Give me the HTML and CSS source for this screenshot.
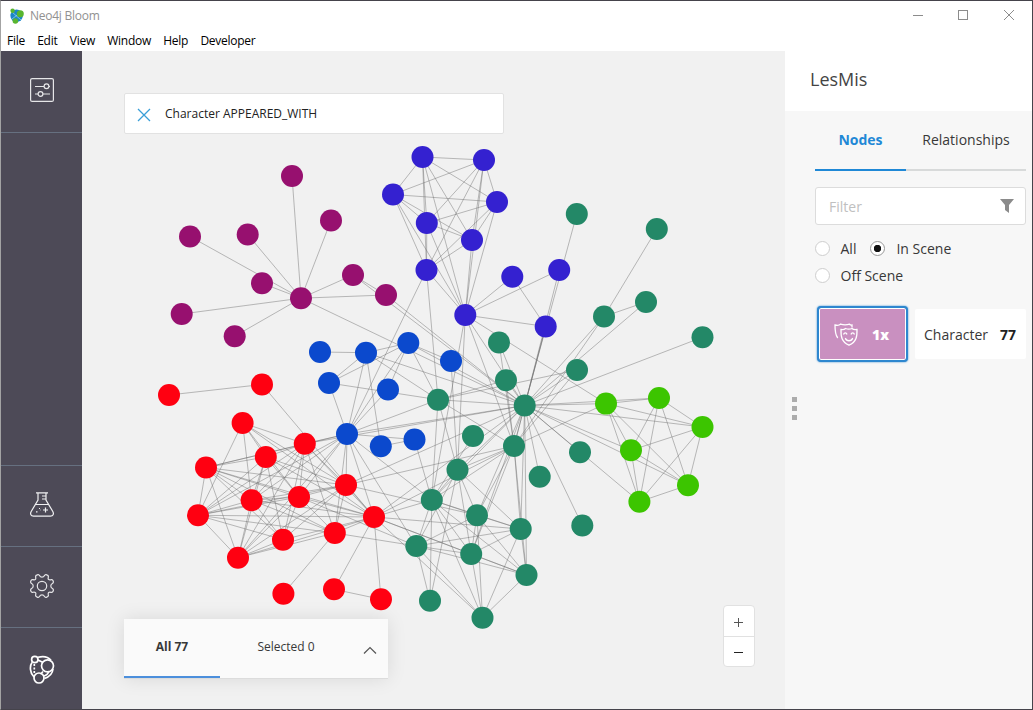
FILE: index.html
```html
<!DOCTYPE html>
<html lang="en">
<head>
<meta charset="utf-8">
<title>Neo4j Bloom</title>
<link rel="stylesheet" href="styles.css">
</head>
<body>
<div class="window">
  <header class="titlebar">
    <svg class="app-logo" width="16" height="16" viewBox="0 0 16 16">
      <circle cx="7.600" cy="7.800" r="6.200" fill="#1b86c8"/>
      <path d="M3 4l9 8M3 11l9-7" stroke="#8fd0ea" stroke-width=".8"/>
      <circle cx="3.600" cy="2.800" r="2.200" fill="#58b530"/>
      <circle cx="11.300" cy="5.700" r="3.500" fill="#58b530"/>
      <circle cx="6.400" cy="13" r="2.800" fill="#58b530"/>
    </svg>
    <span class="app-name">Neo4j Bloom</span>
    <svg class="window-controls" width="104" height="12" viewBox="0 0 104 12" fill="none" stroke="#8c8c8c">
      <path d="M0 6.500h10"/>
      <rect x="45.500" y="1.500" width="9" height="9"/>
      <path d="M91 1l10 10M101 1L91 11"/>
    </svg>
  </header>
  <nav class="menu">
    <span>File</span><span>Edit</span><span>View</span><span>Window</span><span>Help</span><span>Developer</span>
  </nav>
  <main class="workspace">
    <aside class="rail">
      <div class="rail-cell rail-top">
        <svg width="24" height="24" viewBox="0 0 24 24" fill="none" stroke="#e6e6e8" stroke-width="1.200">
          <rect x=".6" y=".6" width="22.800" height="22.800" rx="1.500"/>
          <path d="M5 8.500h9M19 8.500h1M5 16h3M13 16h7"/>
          <circle cx="16.500" cy="8.300" r="2.400"/><circle cx="10.500" cy="16" r="2.400"/>
        </svg>
      </div>
      <div class="rail-space"></div>
      <div class="rail-cell">
        <svg width="24" height="25" viewBox="0 0 24 25" fill="none" stroke="#f0f0f2" stroke-width="1.200">
          <path d="M6 .8h12M8 1v7L1.200 19.500C-.2 22 1 24.200 3.500 24.200h17c2.500 0 3.700-2.200 2.300-4.700L16 8V1M5.500 12.500h13M12 4h4M12 7h4M15.500 15.500v5M13 18h5M9 16.500h1M6 19.800h1.500M10 18h.5"/>
        </svg>
      </div>
      <div class="rail-cell">
        <svg width="24" height="24" viewBox="0 0 24 24" fill="none" stroke="#e6e6e8" stroke-width="1.200" stroke-linejoin="round">
          <circle cx="12" cy="12" r="4.700"/>
          <path d="M7.200.9Q9 .2 9.500 1.600Q10.300 3.200 12 3.200T14.500 1.600Q15 .2 16.800.9Q18.800 1.500 18.300 3.300Q17.800 5 18.700 5.600T21 5.700Q22.600 5.300 23.200 7Q23.800 8.800 22.400 9.500Q20.800 10.300 20.800 12T22.400 14.500Q23.800 15.200 23.200 17Q22.600 18.700 21 18.300T18.700 18.400T18.300 20.700Q18.800 22.500 16.800 23.100Q15 23.800 14.500 22.400Q13.700 20.800 12 20.800T9.500 22.400Q9 23.800 7.200 23.100Q5.200 22.500 5.700 20.700Q6.200 19 5.300 18.400T3 18.300Q1.400 18.700.8 17Q.2 15.200 1.600 14.500Q3.200 13.700 3.200 12T1.600 9.500Q.2 8.800.8 7Q1.400 5.300 3 5.700T5.300 5.600T5.700 3.300Q5.200 1.500 7.200.9z"/>
        </svg>
      </div>
      <div class="rail-cell rail-brand">
        <svg width="26" height="29" viewBox="0 0 26 29" fill="none" stroke="#fff" stroke-width="1.700">
          <path d="M9 2.300c5-1.500 10-.5 13 3M24 14c-.5 5-4 8-8.500 9.500M5 22C.8 18 .5 11 3 7.500M9 5l5 2.500M14 16.500l-2.500 2.800M20 16c-1 3-3 4.500-5 5"/>
          <path d="M5.300 9v9" stroke-dasharray="2 1.500"/>
          <circle cx="5.800" cy="4.500" r="3.200"/><circle cx="18.500" cy="10.800" r="6"/><circle cx="10" cy="23" r="5"/>
        </svg>
      </div>
    </aside>
    <section class="scene">
      <svg class="graph" width="703" height="658" viewBox="82 51 703 658">
        <g id="edges" class="edges"></g>
        <g id="nodes"></g>
      </svg>
      <div class="search">
        <svg width="14" height="14" viewBox="0 0 14 14" stroke="#3a9fd8" stroke-width="1.300"><path d="M1 1l12 12M13 1L1 13"/></svg>
        <span>Character APPEARED_WITH</span>
      </div>
      <div class="counts">
        <div class="count-tab count-active">All 77</div>
        <div class="count-tab count-selected">Selected 0</div>
        <svg width="14" height="9" viewBox="0 0 14 9" fill="none" stroke="#555" stroke-width="1.200"><path d="M1 7.500l6-6 6 6"/></svg>
      </div>
      <div class="zoom">
        <div class="zoom-btn"><svg width="9" height="9" viewBox="0 0 9 9" stroke="#555"><path d="M0 4.500h9M4.500 0v9"/></svg></div>
        <div class="zoom-btn"><svg width="9" height="9" viewBox="0 0 9 9" stroke="#222"><path d="M0 4.500h9"/></svg></div>
      </div>
    </section>
    <aside class="panel">
      <h1 class="panel-title">LesMis</h1>
      <div class="panel-body">
        <div class="tabs"><div class="tab tab-active">Nodes</div><div class="tab tab-rel">Relationships</div></div>
        <div class="filter"><span>Filter</span>
          <svg width="14" height="14" viewBox="0 0 14 14" fill="#8b8b8b"><path d="M0 0h14L9 6v8l-4-3V6z"/></svg>
        </div>
        <div class="radios">
          <span class="radio"></span><span class="r-all">All</span><span class="radio radio-on"></span><span>In Scene</span>
        </div>
        <div class="radios"><span class="radio"></span><span>Off Scene</span></div>
        <div class="category">
          <div class="badge">
            <svg width="24" height="23" viewBox="0 0 24 23" fill="none" stroke="#fff" stroke-width="1.300" stroke-linecap="round">
              <path d="M3.500 14.500C1.500 12 1 9 1 2c2.500.6 4.500.2 5.500-.9 3 .9 6 .9 9 .1.800.9 1.500 1 2.500.8v2"/>
              <path d="M7 6.500c2 .3 3.500 0 4.500-1 2 .7 4.500.7 6.500 0 1 1 2.500 1.300 5 1 .2 7-.5 12.500-8 15.700C7.500 19 6.800 13.500 7 6.500z"/>
              <path d="M9.800 11c.4-1.500 2.600-1.500 3 0M17.200 11c.4-1.500 2.600-1.500 3 0M11.500 15.500c1 3 6 3 7 0"/>
            </svg>
            <b>1x</b>
          </div>
          <div class="cat-name"><span>Character</span><b>77</b></div>
        </div>
      </div>
      <div class="grip"><i></i><i></i><i></i></div>
    </aside>
  </main>
</div>
<script src="graph.js"></script>
</body>
</html>
```
FILE: styles.css
```css
* { box-sizing: border-box; }
body { margin: 0; font-family: "Open Sans", "Noto Sans", sans-serif; color: #383838; }
.window { display: flex; flex-direction: column; width: 1033px; height: 710px; border: 1px solid #45434b; border-left-color: #a3a3a3; background: #fff; overflow: hidden; }
.titlebar { display: flex; align-items: center; height: 30px; padding: 0 17px 0 8px; flex: none; }
.app-name { margin: -2px 0 0 5px; font-size: 12px; letter-spacing: -0.25px; color: #919191; }
.window-controls { margin: -2px -2px 0 auto; }
.menu { display: flex; height: 20px; flex: none; padding-left: 6px; font-size: 12px; line-height: 19px; color: #000; gap: 12.300px; letter-spacing: -0.270px; }
.workspace { display: flex; height: 658px; }
.rail { display: flex; flex-direction: column; width: 81px; flex: none; background: #4d4a57; }
.rail-cell { display: flex; align-items: center; justify-content: center; height: 81px; flex: none; padding-bottom: 3px; }
.rail-space { flex: 1; border-top: 1px solid #667080; }
.rail-space ~ .rail-cell { border-top: 1px solid #667080; }
.rail-space ~ .rail-brand { height: 82px; padding: 1px 0 0; }
.scene { position: relative; width: 703px; flex: none; background: #f1f1f1; overflow: hidden; }
.graph { display: block; }
.edges line { stroke: #6c6c6c; stroke-opacity: .5; stroke-width: .9; }
.search { position: absolute; left: 42px; top: 42px; width: 380px; height: 41px; display: flex; align-items: center; gap: 14px; padding: 0 12px; background: #fff; border: 1px solid #e2e2e2; border-radius: 2px; font-size: 12px; color: #222; }
.search svg { margin-top: 2px; }
.counts { position: absolute; left: 42px; top: 568px; width: 264px; height: 60px; display: flex; background: #fafafa; border-bottom: 1px solid #dcdcdc; box-shadow: 0 0 18px rgba(0,0,0,.1); font-size: 12px; }
.count-tab { height: 59px; line-height: 56px; text-align: center; }
.count-active { width: 96px; font-weight: 700; border-bottom: 2px solid #4c8fdc; }
.count-selected { width: 132px; }
.counts svg { margin: 27px 0 0 11px; }
.zoom { position: absolute; left: 641px; top: 554px; width: 32px; height: 62px; background: #fff; border: 1px solid #e1e1e1; border-radius: 4px; }
.zoom-btn { display: flex; align-items: center; justify-content: center; height: 30px; padding: 2px 1px 0 0; }
.zoom-btn + .zoom-btn { border-top: 1px solid #e1e1e1; padding-top: 1px; }
.panel { position: relative; flex: 1; background: #f7f7f7; }
.panel-title { margin: 0; height: 60px; padding-left: 25px; background: #fff; font-size: 18px; line-height: 56px; font-weight: 400; color: #444; }
.panel-body { padding: 0 6px 0 30px; font-size: 14px; }
.tabs { display: flex; height: 60px; }
.tab { border-bottom: 2px solid #d8dada; line-height: 58px; text-align: center; }
.tab-active { width: 91px; color: #1f88d6; font-weight: 700; border-color: #1f88d6; }
.tab-rel { width: 120px; }
.filter { display: flex; align-items: center; justify-content: space-between; height: 38px; margin: 16px 0 10px; padding: 0 11px 0 13px; background: #fff; border: 1px solid #dcdcdc; border-radius: 3px; color: #c0c0c0; }
.radios { display: flex; align-items: center; height: 27px; }
.radio { width: 15px; height: 15px; margin-right: 10.500px; border: 1px solid #cecece; border-radius: 50%; background: #fff; }
.radio-on { border-color: #999; background: radial-gradient(circle, #111 0 3.400px, #fff 4px); margin-right: 11.500px; }
.r-all { margin-right: 13.500px; }
.category { display: flex; margin-top: 17px; gap: 7px; padding-left: 2px; }
.badge { display: flex; align-items: center; gap: 14px; width: 91px; height: 56px; padding-left: 15px; border: 2px solid #2e87cf; border-radius: 4px; background: #c990c0; box-shadow: inset 0 0 0 1px #fff, 0 0 2px #2e87cf; color: #fff; }
.badge b { font-weight: 800; }
.cat-name { display: flex; align-items: center; gap: 12px; width: 111px; height: 50px; margin-top: 3px; padding-left: 9px; background: #fff; border-radius: 2px; }
.cat-name b { color: #222; }
.grip { position: absolute; left: 7px; top: 346px; display: grid; gap: 4px; }
.grip i { width: 5px; height: 5px; background: #acacac; }
```
FILE: graph.js
```javascript
const palette = { p: "#97106f", i: "#3421d0", b: "#0b49cd", g: "#238867", l: "#3cc500", r: "#ff0011" };

const nodes = {
  Napoleon: [292, 176, "p"], Countess: [331, 220.5, "p"], Geborand: [190, 236.5, "p"], Champtercier: [247.7, 234.5, "p"],
  Cravatte: [262, 283.3, "p"], Baptistine: [353, 275, "p"], Magloire: [386, 295, "p"], Myriel: [301, 298.2, "p"],
  Count: [181.7, 314, "p"], OldMan: [234.7, 336.2, "p"],
  Listolier: [422.5, 157, "i"], Fameuil: [484, 160, "i"], Blacheville: [393, 194.5, "i"], Favourite: [497, 202, "i"],
  Dahlia: [426.8, 223, "i"], Zephine: [472, 240, "i"], Tholomyes: [426.5, 270, "i"], Fantine: [465.3, 315, "i"],
  Perpetue: [512.3, 276.7, "i"], Marguerite: [559.2, 270, "i"], Simplice: [545.7, 326.5, "i"],
  Vaubois: [320, 352, "b"], MlleG: [366, 352.7, "b"], Gillenormand: [408.3, 343, "b"], Magnon: [451, 361, "b"],
  LtG: [329, 383, "b"], BaronessT: [388, 389.5, "b"], Marius: [347, 434, "b"], MmePontmercy: [380.8, 446.3, "b"], Pontmercy: [414.5, 439.5, "b"],
  Labarre: [576.8, 214, "g"], Gribier: [656.8, 229, "g"], Innocent: [646, 302, "g"], Fauchelevent: [604, 316.5, "g"],
  Isabeau: [702.5, 337.2, "g"], Woman1: [499, 342.5, "g"], Woman2: [506, 380.2, "g"], Toussaint: [577, 370, "g"],
  Cosette: [438, 399.7, "g"], Valjean: [524.7, 405.5, "g"], Boulatruelle: [473, 436, "g"], Javert: [514, 446, "g"],
  Gervais: [580, 452.3, "g"], MmeThenardier: [457.5, 469.7, "g"], MmeDeR: [539.7, 476.8, "g"], Thenardier: [431.8, 500, "g"],
  Claquesous: [477, 515.2, "g"], Scaufflaire: [582.3, 525.5, "g"], Babet: [520.7, 529, "g"], Eponine: [416.3, 546, "g"],
  Gueulemer: [471.2, 554, "g"], Montparnasse: [526.5, 575, "g"], Anzelma: [430, 600.8, "g"], Brujon: [482.5, 617.7, "g"],
  Bamatabois: [606, 403.6, "l"], Judge: [659, 398, "l"], Brevet: [702.5, 427, "l"], Champmathieu: [631, 450.3, "l"],
  Chenildieu: [688, 485.2, "l"], Cochepaille: [639.4, 501.7, "l"],
  Jondrette: [169, 395, "r"], Burgon: [262, 384.5, "r"], Hucheloup: [242.6, 423, "r"], Bossuet: [304.8, 443.7, "r"],
  Grantaire: [265.8, 457, "r"], Combeferre: [206, 467.5, "r"], Enjolras: [346, 485, "r"], Bahorel: [198, 515.3, "r"],
  Joly: [251.6, 500.2, "r"], Courfeyrac: [299, 497, "r"], Gavroche: [374, 517, "r"], Mabeuf: [334.8, 533, "r"],
  Prouvaire: [283, 539.7, "r"], Feuilly: [238, 557.7, "r"], Plutarch: [283.4, 593.7, "r"], Child1: [334, 589.3, "r"], Child2: [381, 599.3, "r"]
};

const links = {
  Myriel: "Napoleon Countess Geborand Champtercier Cravatte Count OldMan Baptistine Magloire Valjean",
  Baptistine: "Magloire Valjean",
  Magloire: "Valjean",
  Listolier: "Fameuil Blacheville Favourite Dahlia Zephine Tholomyes Fantine",
  Fameuil: "Blacheville Favourite Dahlia Zephine Tholomyes Fantine",
  Blacheville: "Favourite Dahlia Zephine Tholomyes Fantine",
  Favourite: "Dahlia Zephine Tholomyes Fantine",
  Dahlia: "Zephine Tholomyes Fantine",
  Zephine: "Tholomyes Fantine",
  Tholomyes: "Fantine Cosette Marius",
  Fantine: "Perpetue Marguerite Simplice Valjean Thenardier MmeThenardier Javert Bamatabois",
  Simplice: "Perpetue Valjean Javert",
  Valjean: "Marguerite Labarre Isabeau Gervais MmeDeR Scaufflaire Innocent Fauchelevent Woman1 Woman2 Toussaint Cosette Javert Thenardier MmeThenardier Bamatabois Judge Brevet Champmathieu Chenildieu Cochepaille Gillenormand MlleG Marius Enjolras Bossuet Gavroche Babet Gueulemer Claquesous Montparnasse",
  Fauchelevent: "Gribier Innocent Javert",
  Javert: "MmeThenardier Thenardier Cosette Bamatabois Woman1 Woman2 Toussaint Babet Gueulemer Claquesous Montparnasse Gavroche Enjolras",
  Cosette: "MlleG Gillenormand LtG Marius Thenardier MmeThenardier Toussaint Woman2",
  Gillenormand: "Magnon MlleG Marius LtG BaronessT",
  MlleG: "Vaubois MmePontmercy LtG Marius",
  Marius: "LtG BaronessT Pontmercy Thenardier Eponine Gavroche Mabeuf Enjolras Combeferre Feuilly Bahorel Bossuet Joly Courfeyrac",
  Pontmercy: "MmePontmercy Thenardier",
  MmeThenardier: "Thenardier Magnon Eponine Anzelma Gueulemer Babet Claquesous",
  Thenardier: "Boulatruelle Eponine Anzelma Gueulemer Babet Claquesous Montparnasse Brujon Gavroche",
  Eponine: "Anzelma Mabeuf Courfeyrac Gueulemer Babet Claquesous Montparnasse Brujon",
  Gueulemer: "Babet Claquesous Montparnasse Brujon Gavroche",
  Babet: "Claquesous Montparnasse Brujon Gavroche",
  Claquesous: "Montparnasse Brujon Enjolras",
  Montparnasse: "Brujon Gavroche",
  Gavroche: "Brujon Burgon Child1 Child2 Mabeuf Enjolras Combeferre Prouvaire Feuilly Courfeyrac Bahorel Bossuet Joly Grantaire Hucheloup",
  Child1: "Child2",
  Burgon: "Jondrette",
  Bamatabois: "Judge Brevet Champmathieu Chenildieu Cochepaille",
  Judge: "Brevet Champmathieu Chenildieu Cochepaille",
  Brevet: "Champmathieu Chenildieu Cochepaille",
  Champmathieu: "Chenildieu Cochepaille",
  Chenildieu: "Cochepaille",
  Mabeuf: "Plutarch Enjolras Combeferre Feuilly Courfeyrac Bahorel Bossuet Joly",
  Enjolras: "Combeferre Prouvaire Feuilly Courfeyrac Bahorel Bossuet Joly Grantaire Hucheloup",
  Combeferre: "Prouvaire Feuilly Courfeyrac Bahorel Bossuet Joly Grantaire",
  Prouvaire: "Feuilly Courfeyrac Bahorel Bossuet Joly Grantaire",
  Feuilly: "Courfeyrac Bahorel Bossuet Joly Grantaire",
  Courfeyrac: "Bahorel Bossuet Joly Grantaire Hucheloup",
  Bahorel: "Bossuet Joly Grantaire Hucheloup",
  Bossuet: "Joly Grantaire Hucheloup",
  Joly: "Grantaire Hucheloup",
  Grantaire: "Hucheloup"
};

function add(parent, tag, attrs) {
  const el = document.createElementNS("http://www.w3.org/2000/svg", tag);
  for (const key in attrs) el.setAttribute(key, attrs[key]);
  parent.appendChild(el);
}

const edgeLayer = document.getElementById("edges");
for (const from in links) {
  for (const to of links[from].split(" ")) {
    const [x1, y1] = nodes[from];
    const [x2, y2] = nodes[to];
    add(edgeLayer, "line", { x1, y1, x2, y2 });
  }
}

const nodeLayer = document.getElementById("nodes");
for (const name in nodes) {
  const [cx, cy, group] = nodes[name];
  add(nodeLayer, "circle", { cx, cy, r: 11, fill: palette[group] });
}
```
